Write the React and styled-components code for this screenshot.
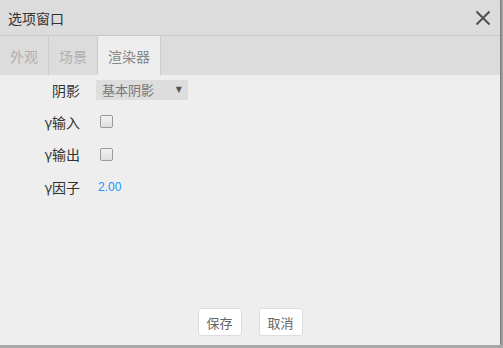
import React from 'react'
import styled, { createGlobalStyle } from 'styled-components'

const GlobalStyle = createGlobalStyle`
  html, body {
    margin: 0;
    padding: 0;
    background: #a8a8a8;
    overflow: hidden;
  }
  body {
    font-family: "Microsoft YaHei", "Noto Sans CJK SC", "Liberation Sans", sans-serif;
  }
`;

const Dialog = styled.div`
  width: 500px;
  height: 345px;
  background: #eeeeee;
  display: flex;
  flex-direction: column;
  box-shadow: 1px 0 2px rgba(0, 0, 0, 0.35);
`;

const Header = styled.div`
  height: 35px;
  flex: 0 0 auto;
  display: flex;
  align-items: center;
  justify-content: space-between;
  padding: 0 9px 0 8px;
  background: #dcdcdc;
  border-bottom: 1px solid #c8c8c8;
`;

const Title = styled.div`
  font-size: 14px;
  color: #333;
  line-height: 1;
`;

const CloseButton = styled.div`
  width: 16px;
  height: 16px;
  display: flex;
  align-items: center;
  justify-content: center;
  cursor: pointer;
`;

const TabBar = styled.div`
  height: 39px;
  flex: 0 0 auto;
  display: flex;
  background: #dcdcdc;
`;

const Tab = styled.div`
  display: flex;
  align-items: center;
  padding: 0 10px;
  font-size: 14px;
  color: ${props => props.active ? '#8a8a8a' : '#b0b0b0'};
  background: ${props => props.active ? '#eeeeee' : 'transparent'};
  border-right: 1px solid #cbcbcb;
`;

const Body = styled.div`
  flex: 1 1 auto;
  display: grid;
  grid-template-columns: 80px 1fr;
  grid-auto-rows: 32.3px;
  column-gap: 16px;
  align-content: start;
  margin-top: -1.5px;
`;

const Label = styled.div`
  font-size: 14px;
  color: #333;
  text-align: right;
  align-self: center;
`;

const Field = styled.div`
  display: flex;
  align-items: center;
`;

const Select = styled.div`
  width: 92px;
  height: 20px;
  box-sizing: border-box;
  background: #dddddd;
  display: flex;
  align-items: center;
  justify-content: space-between;
  padding: 0 6px 0 6px;
  font-size: 13px;
  color: #777;
`;

const Arrow = styled.span`
  font-size: 8px;
  color: #555;
  font-family: "DejaVu Sans", sans-serif;
`;

const Check = styled.span`
  width: 11px;
  height: 11px;
  margin-left: 4px;
  border: 1px solid #9a9a9a;
  border-radius: 2px;
  background: linear-gradient(#f2f2f2, #dedede);
`;

const Value = styled.span`
  font-size: 12px;
  color: #1e90ff;
  font-family: "Liberation Sans", "Noto Sans", sans-serif;
  margin-left: 2px;
`;

const Footer = styled.div`
  flex: 0 0 auto;
  display: flex;
  justify-content: center;
  gap: 17px;
  padding: 0 0 9px 0;
`;

const Button = styled.div`
  width: 44px;
  height: 28px;
  box-sizing: border-box;
  display: flex;
  align-items: center;
  justify-content: center;
  background: #ffffff;
  border: 1px solid #dddddd;
  border-radius: 3px;
  font-size: 13px;
  color: #666;
`;

const rows = [
  { label: '阴影', kind: 'select', value: '基本阴影' },
  { label: 'γ输入', kind: 'check' },
  { label: 'γ输出', kind: 'check' },
  { label: 'γ因子', kind: 'value', value: '2.00' },
];

const App = () => {
  return (
    <>
      <GlobalStyle />
      <Dialog>
        <Header>
          <Title>选项窗口</Title>
          <CloseButton>
            <svg width="16" height="16" viewBox="0 0 16 16">
              <path d="M1.5 1.5 L14.5 14.5 M14.5 1.5 L1.5 14.5" stroke="#505050" strokeWidth="2" fill="none" />
            </svg>
          </CloseButton>
        </Header>
        <TabBar>
          <Tab>外观</Tab>
          <Tab>场景</Tab>
          <Tab active>渲染器</Tab>
        </TabBar>
        <Body>
          {rows.map(r => (
            <React.Fragment key={r.label}>
              <Label>{r.label}</Label>
              <Field>
                {r.kind === 'select' && (
                  <Select>
                    {r.value}
                    <Arrow>▼</Arrow>
                  </Select>
                )}
                {r.kind === 'check' && <Check />}
                {r.kind === 'value' && <Value>{r.value}</Value>}
              </Field>
            </React.Fragment>
          ))}
        </Body>
        <Footer>
          <Button>保存</Button>
          <Button>取消</Button>
        </Footer>
      </Dialog>
    </>
  )
}

export default App;
